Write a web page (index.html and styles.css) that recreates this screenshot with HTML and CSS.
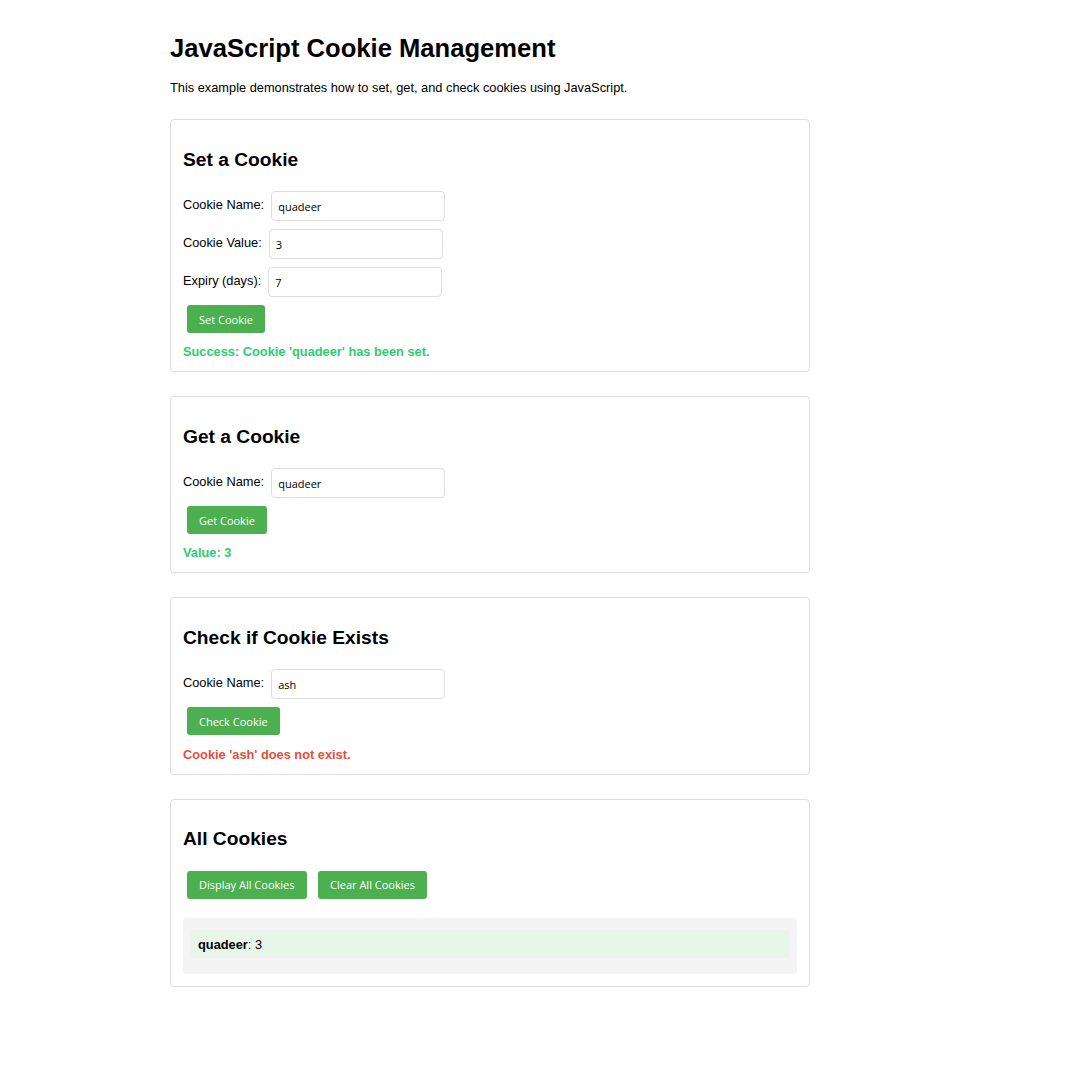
FILE: index.html
```html
<!DOCTYPE html>
<html>
<head>
<meta charset="utf-8">
<title>JavaScript Cookie Management</title>
<link rel="stylesheet" href="styles.css">
</head>
<body>
<div class="page">
  <h1 class="title">JavaScript Cookie Management</h1>
  <p class="intro">This example demonstrates how to set, get, and check cookies using JavaScript.</p>

  <section class="card">
    <h2 class="card-title">Set a Cookie</h2>
    <div class="row"><label class="lbl">Cookie Name:</label> <input class="field" type="text" value="quadeer"></div>
    <div class="row"><label class="lbl">Cookie Value:</label> <input class="field" type="text" value="3"></div>
    <div class="row"><label class="lbl">Expiry (days):</label> <input class="field" type="text" value="7"></div>
    <div class="row"><button class="btn">Set Cookie</button></div>
    <div class="msg ok">Success: Cookie 'quadeer' has been set.</div>
  </section>

  <section class="card">
    <h2 class="card-title">Get a Cookie</h2>
    <div class="row"><label class="lbl">Cookie Name:</label> <input class="field" type="text" value="quadeer"></div>
    <div class="row"><button class="btn">Get Cookie</button></div>
    <div class="msg ok">Value: 3</div>
  </section>

  <section class="card">
    <h2 class="card-title">Check if Cookie Exists</h2>
    <div class="row"><label class="lbl">Cookie Name:</label> <input class="field" type="text" value="ash"></div>
    <div class="row"><button class="btn">Check Cookie</button></div>
    <div class="msg err">Cookie 'ash' does not exist.</div>
  </section>

  <section class="card">
    <h2 class="card-title">All Cookies</h2>
    <div class="row"><button class="btn">Display All Cookies</button> <button class="btn">Clear All Cookies</button></div>
    <div class="cookie-list">
      <div class="cookie-item"><strong>quadeer</strong>: 3</div>
    </div>
  </section>
</div>
</body>
</html>
```

FILE: styles.css
```css
html, body {
  margin: 0;
  padding: 0;
  background: #fff;
}
body {
  font-family: "Liberation Sans", Arial, sans-serif;
  font-size: 12.8px;
  color: #000;
}
.page {
  width: 640px;
  margin-left: 170px;
  padding-top: 16px;
}
.title {
  font-size: 25.6px;
  font-weight: bold;
  margin: 17px 0;
  line-height: 30px;
}
.intro {
  margin: 13px 0;
  line-height: 15px;
}
.card {
  border: 1px solid #ddd;
  border-radius: 4px;
  padding: 12px;
  margin: 24px 0;
}
.card-title {
  font-size: 19.2px;
  font-weight: bold;
  margin: 16.5px 0;
  line-height: 22px;
}
.row {
  line-height: 15px;
}
.lbl {
  font-size: 12.8px;
}
.field {
  box-sizing: border-box;
  width: 174px;
  height: 30px;
  margin: 4px 0 4px 3.5px;
  padding: 0 6px;
  border: 1px solid #ddd;
  border-radius: 4px;
  font-family: "Open Sans", "Noto Sans", sans-serif;
  font-size: 11px;
  color: #000;
  vertical-align: middle;
}
.btn {
  margin: 4px;
  padding: 0 12px;
  background: #4CAF50;
  color: #fff;
  border: none;
  border-radius: 3px;
  font-family: "Open Sans", "Noto Sans", sans-serif;
  font-size: 11px;
  line-height: 15px;
  height: 28px;
  vertical-align: middle;
}
.msg {
  margin-top: 7.2px;
  font-weight: bold;
}
.ok { color: #2ecc71; }
.err { color: #e74c3c; }
.cookie-list {
  margin-top: 15.5px;
  background: #f4f4f4;
  border-radius: 3px;
  padding: 12px 8px 16px;
}
.cookie-item {
  background: #e8f5e9;
  border-radius: 3px;
  padding: 6.5px 7px;
}
```
